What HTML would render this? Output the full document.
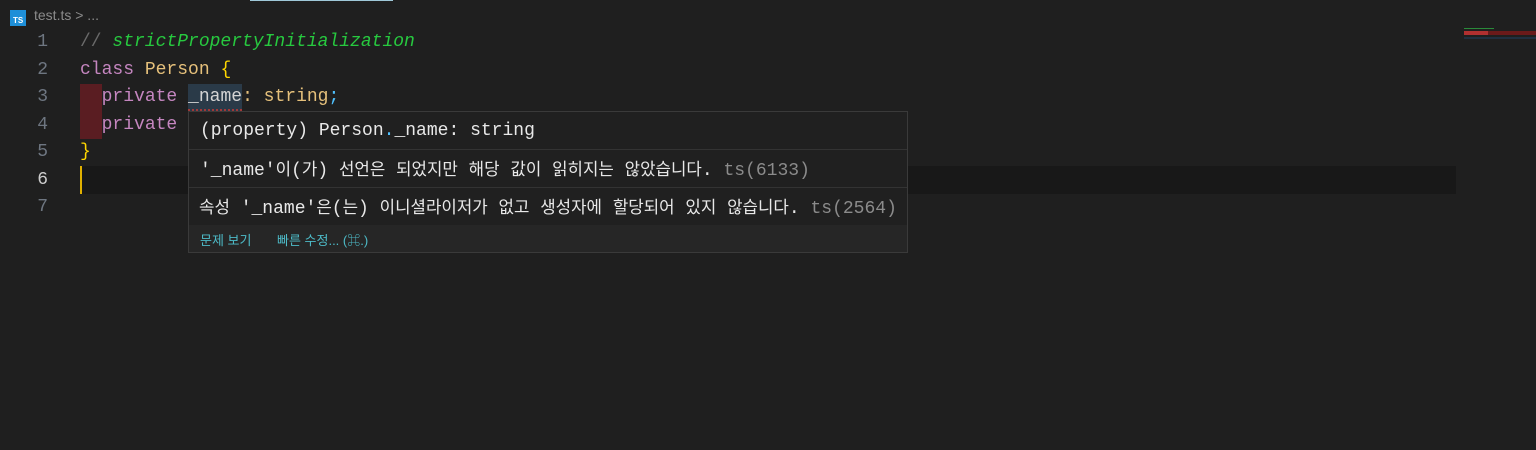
<!DOCTYPE html>
<html><head><meta charset="utf-8"><style>
*{margin:0;padding:0;box-sizing:border-box}
body{width:1536px;height:450px;background:#1f1f1f;position:relative;overflow:hidden;font-family:"Liberation Mono","Noto Sans CJK KR",monospace;font-size:18px;color:#d4d4d4}
.a{position:absolute;white-space:pre}
.ln{position:absolute;width:48px;text-align:right;color:#6e7681;left:0}
.k{color:#c586c0}.c{color:#e5c07b}.y{color:#ffd700}.g{color:#27c93f}.s{color:#4fc1ff}
.h{font-size:16.8px}
.sans{font-family:"Liberation Sans","Noto Sans CJK KR",sans-serif}
</style></head><body>
<div class="a" style="left:250px;top:0;width:143px;height:1px;background:#9fc8d8"></div>
<div class="a" style="left:10px;top:10px;width:16px;height:16px;background:#1e8fd8"></div>
<div class="a sans" style="left:13px;top:16px;font-size:8px;font-weight:bold;color:#fff">TS</div>
<div class="a sans" style="left:34px;top:7px;font-size:14px;color:#8b8b8b">test.ts &gt; ...</div>

<div class="a" style="left:80px;top:166px;width:1376px;height:28px;background:#181818"></div>
<div class="a" style="left:80px;top:166px;width:2px;height:28px;background:#e0b000"></div>
<div class="a" style="left:80px;top:84px;width:22px;height:55px;background:#5a1d22"></div>
<div class="a" style="left:188px;top:84px;width:54px;height:27px;background:#2a3a48"></div>

<div class="ln" style="top:32px">1</div>
<div class="ln" style="top:60px">2</div>
<div class="ln" style="top:87px">3</div>
<div class="ln" style="top:115px">4</div>
<div class="ln" style="top:142px">5</div>
<div class="ln" style="top:170px;color:#ccc">6</div>
<div class="ln" style="top:197px">7</div>

<div class="a" style="left:80px;top:32px"><span style="color:#6a6a6a">// </span><i class="g">strictPropertyInitialization</i></div>
<div class="a" style="left:80px;top:60px"><span class="k">class</span> <span class="c">Person</span> <span class="y">{</span></div>
<div class="a" style="left:80px;top:87px">  <span class="k">private</span> <span style="color:#d4d4d4">_name</span><span class="c">: string</span><span class="s">;</span></div>
<div class="a" style="left:188px;top:108px;width:54px;height:3px;border-bottom:2px dotted #a03838"></div>
<div class="a" style="left:80px;top:115px">  <span class="k">private</span></div>
<div class="a" style="left:80px;top:142px"><span class="y">}</span></div>

<div class="a" style="left:188px;top:111px;width:720px;height:142px;background:#202020;border:1px solid #3a3a3a">
 <div class="a" style="left:11px;top:9px;color:#e8e8e8">(property) Person<span class="s">.</span>_name: string</div>
 <div class="a" style="left:0;top:37px;width:718px;height:1px;background:#333"></div>
 <div class="a" style="left:11px;top:44px;color:#e8e8e8">'_name'<span class="h">이</span>(<span class="h">가</span>) <span class="h">선언은</span> <span class="h">되었지만</span> <span class="h">해당</span> <span class="h">값이</span> <span class="h">읽히지는</span> <span class="h">않았습니다</span>. <span style="color:#8b8b8b">ts(6133)</span></div>
 <div class="a" style="left:0;top:75px;width:718px;height:1px;background:#333"></div>
 <div class="a" style="left:10px;top:82px;color:#e8e8e8"><span class="h">속성</span> '_name'<span class="h">은</span>(<span class="h">는</span>) <span class="h">이니셜라이저가</span> <span class="h">없고</span> <span class="h">생성자에</span> <span class="h">할당되어</span> <span class="h">있지</span> <span class="h">않습니다</span>. <span style="color:#8b8b8b">ts(2564)</span></div>
 <div class="a" style="left:0;top:113px;width:718px;height:27px;background:#262626"></div>
 <div class="a sans" style="left:11px;top:118px;font-size:13px;color:#4dbbc8">문제 보기</div>
 <div class="a sans" style="left:88px;top:118px;font-size:13px;color:#4dbbc8">빠른 수정... (⌘.)</div>
</div>

<div class="a" style="left:1464px;top:28px;width:30px;height:1px;background:#2a8a3a"></div>
<div class="a" style="left:1464px;top:31px;width:72px;height:4px;background:#6a1a1a"></div>
<div class="a" style="left:1464px;top:31px;width:24px;height:4px;background:#b03030"></div>
<div class="a" style="left:1464px;top:37px;width:72px;height:2px;background:#203040"></div>
</body></html>
